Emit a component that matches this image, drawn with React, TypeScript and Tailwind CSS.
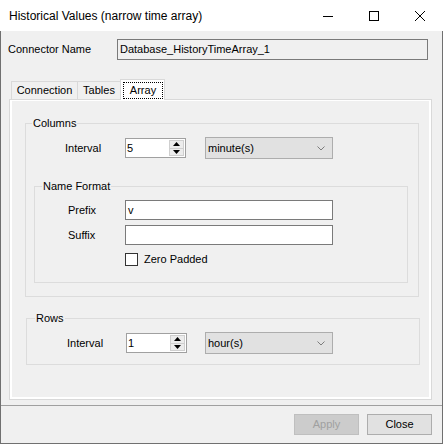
const font = "font-['Liberation_Sans',Arial,sans-serif]";

function SpinBox({ value }: { value: string }) {
  return (
    <div className="flex h-[20px] w-[61px] items-stretch border border-[#a0a0a0] bg-white">
      <span className="flex flex-1 items-center pl-[1px]">{value}</span>
      <div className="mr-px flex w-[15px] flex-col py-px">
        <div className="flex flex-1 items-center justify-center border border-[#cfcfcf] bg-[#ececec]">
          <svg width="7" height="4" viewBox="0 0 7 4">
            <polygon points="3.5,0 7,4 0,4" fill="#000" />
          </svg>
        </div>
        <div className="flex flex-1 items-center justify-center border border-t-0 border-[#cfcfcf] bg-[#ececec]">
          <svg width="7" height="4" viewBox="0 0 7 4">
            <polygon points="0,0 7,0 3.5,4" fill="#000" />
          </svg>
        </div>
      </div>
    </div>
  );
}

function Combo({ value }: { value: string }) {
  return (
    <div className="flex h-[22px] w-[128px] items-center justify-between border border-[#adadad] bg-[#e1e1e1] pl-[2px] pr-[7px]">
      <span>{value}</span>
      <svg width="8" height="5" viewBox="0 0 8 5">
        <polyline points="0.5,0.5 4,4 7.5,0.5" fill="none" stroke="#707070" strokeWidth="0.9" />
      </svg>
    </div>
  );
}

function TextBox({ value, width }: { value: string; width: string }) {
  return (
    <div className={`flex h-[20px] items-center border border-[#7a7a7a] bg-white pl-[2px] ${width}`}>
      {value}
    </div>
  );
}

export default function App() {
  return (
    <div className={`flex h-[446px] w-[443px] flex-col bg-white text-[11px] text-black ${font}`}>
      {/* title bar */}
      <div className="flex h-[31px] shrink-0 items-center bg-white">
        <span className="pl-[9px] text-[12px]">Historical Values (narrow time array)</span>
        <div className="ml-auto flex h-full">
          <div className="flex w-[46px] items-center justify-center">
            <svg width="10" height="10" viewBox="0 0 10 10">
              <line x1="0" y1="5.5" x2="10" y2="5.5" stroke="#000" strokeWidth="1" />
            </svg>
          </div>
          <div className="flex w-[46px] items-center justify-center">
            <svg width="10" height="10" viewBox="0 0 10 10">
              <rect x="0.5" y="0.5" width="9" height="9" fill="none" stroke="#000" strokeWidth="1" />
            </svg>
          </div>
          <div className="flex w-[46px] items-center justify-center">
            <svg width="10" height="10" viewBox="0 0 10 10">
              <path d="M0 0 L10 10 M10 0 L0 10" stroke="#000" strokeWidth="1" />
            </svg>
          </div>
        </div>
      </div>

      {/* dialog body */}
      <div className="flex h-[413px] shrink-0 flex-col border-x border-b border-[#707070] bg-[#f0f0f0]">
        <div className="mt-[8px] flex h-[21px] items-center">
          <span className="w-[116px] pl-[7px]">Connector Name</span>
          <div className="flex h-[21px] w-[311px] items-center border border-[#7a7a7a] bg-[#f0f0f0] pl-[2px]">
            Database_HistoryTimeArray_1
          </div>
        </div>

        {/* tab headers */}
        <div className="mt-[19px] flex h-[20px] items-end pl-[10px]">
          <div className="flex h-[18px] w-[67px] items-center justify-center border border-b-0 border-[#d9d9d9] bg-[#f0f0f0]">
            Connection
          </div>
          <div className="-ml-px flex h-[18px] w-[44px] items-center justify-center border border-b-0 border-[#d9d9d9] bg-[#f0f0f0]">
            Tables
          </div>
          <div className="relative z-10 -mb-px -ml-px h-[21px] w-[45px] border border-b-0 border-[#d9d9d9] bg-white">
            <div className="ml-[2px] mr-px mt-[2px] flex h-[17px] items-center justify-center border border-dotted border-black">
              Array
            </div>
          </div>
        </div>

        {/* tab page */}
        <div className="ml-[8px] h-[301px] w-[423px] border border-[#d9d9d9] bg-white pb-[2px] pl-[2px] pr-[2px] pt-px">
          <div className="h-full bg-[#f0f0f0] pt-[15px]">
            <fieldset className="ml-[13px] h-[181px] w-[394px] border border-[#dcdcdc]">
              <legend className="ml-[6px] px-px leading-[14px]">Columns</legend>
              <div className="mt-[7px] flex h-[22px] items-center">
                <span className="w-[99px] pl-[39px]">Interval</span>
                <SpinBox value="5" />
                <div className="ml-[19px]">
                  <Combo value="minute(s)" />
                </div>
              </div>

              <fieldset className="ml-[8px] mt-[20px] h-[104px] w-[374px] border border-[#dcdcdc]">
                <legend className="ml-[7px] px-px leading-[14px]">Name Format</legend>
                <div className="mt-[7px] flex items-center">
                  <span className="w-[90px] pl-[33px]">Prefix</span>
                  <TextBox value="v" width="w-[208px]" />
                </div>
                <div className="mt-[5px] flex items-center">
                  <span className="w-[90px] pl-[33px]">Suffix</span>
                  <TextBox value="" width="w-[208px]" />
                </div>
                <div className="ml-[90px] mt-[6px] flex items-center">
                  <div className="h-[13px] w-[13px] border border-[#333333] bg-white" />
                  <span className="ml-[6px]">Zero Padded</span>
                </div>
              </fieldset>
            </fieldset>

            <fieldset className="ml-[14px] mt-[14px] h-[54px] w-[394px] border border-[#dcdcdc]">
              <legend className="ml-[8px] px-px leading-[14px]">Rows</legend>
              <div className="mt-[7px] flex h-[22px] items-center">
                <span className="w-[99px] pl-[40px]">Interval</span>
                <SpinBox value="1" />
                <div className="ml-[18px]">
                  <Combo value="hour(s)" />
                </div>
              </div>
            </fieldset>
          </div>
        </div>

        <div className="mt-[5px] h-px bg-[#a0a0a0]" />

        <div className="mt-[8px] flex justify-end gap-[8px] pr-[10px]">
          <div className="flex h-[21px] w-[65px] items-center justify-center border border-[#bfbfbf] bg-[#cccccc] text-[#a0a0a0]">
            Apply
          </div>
          <div className="flex h-[21px] w-[65px] items-center justify-center border border-[#adadad] bg-[#e1e1e1]">
            Close
          </div>
        </div>
      </div>
    </div>
  );
}
